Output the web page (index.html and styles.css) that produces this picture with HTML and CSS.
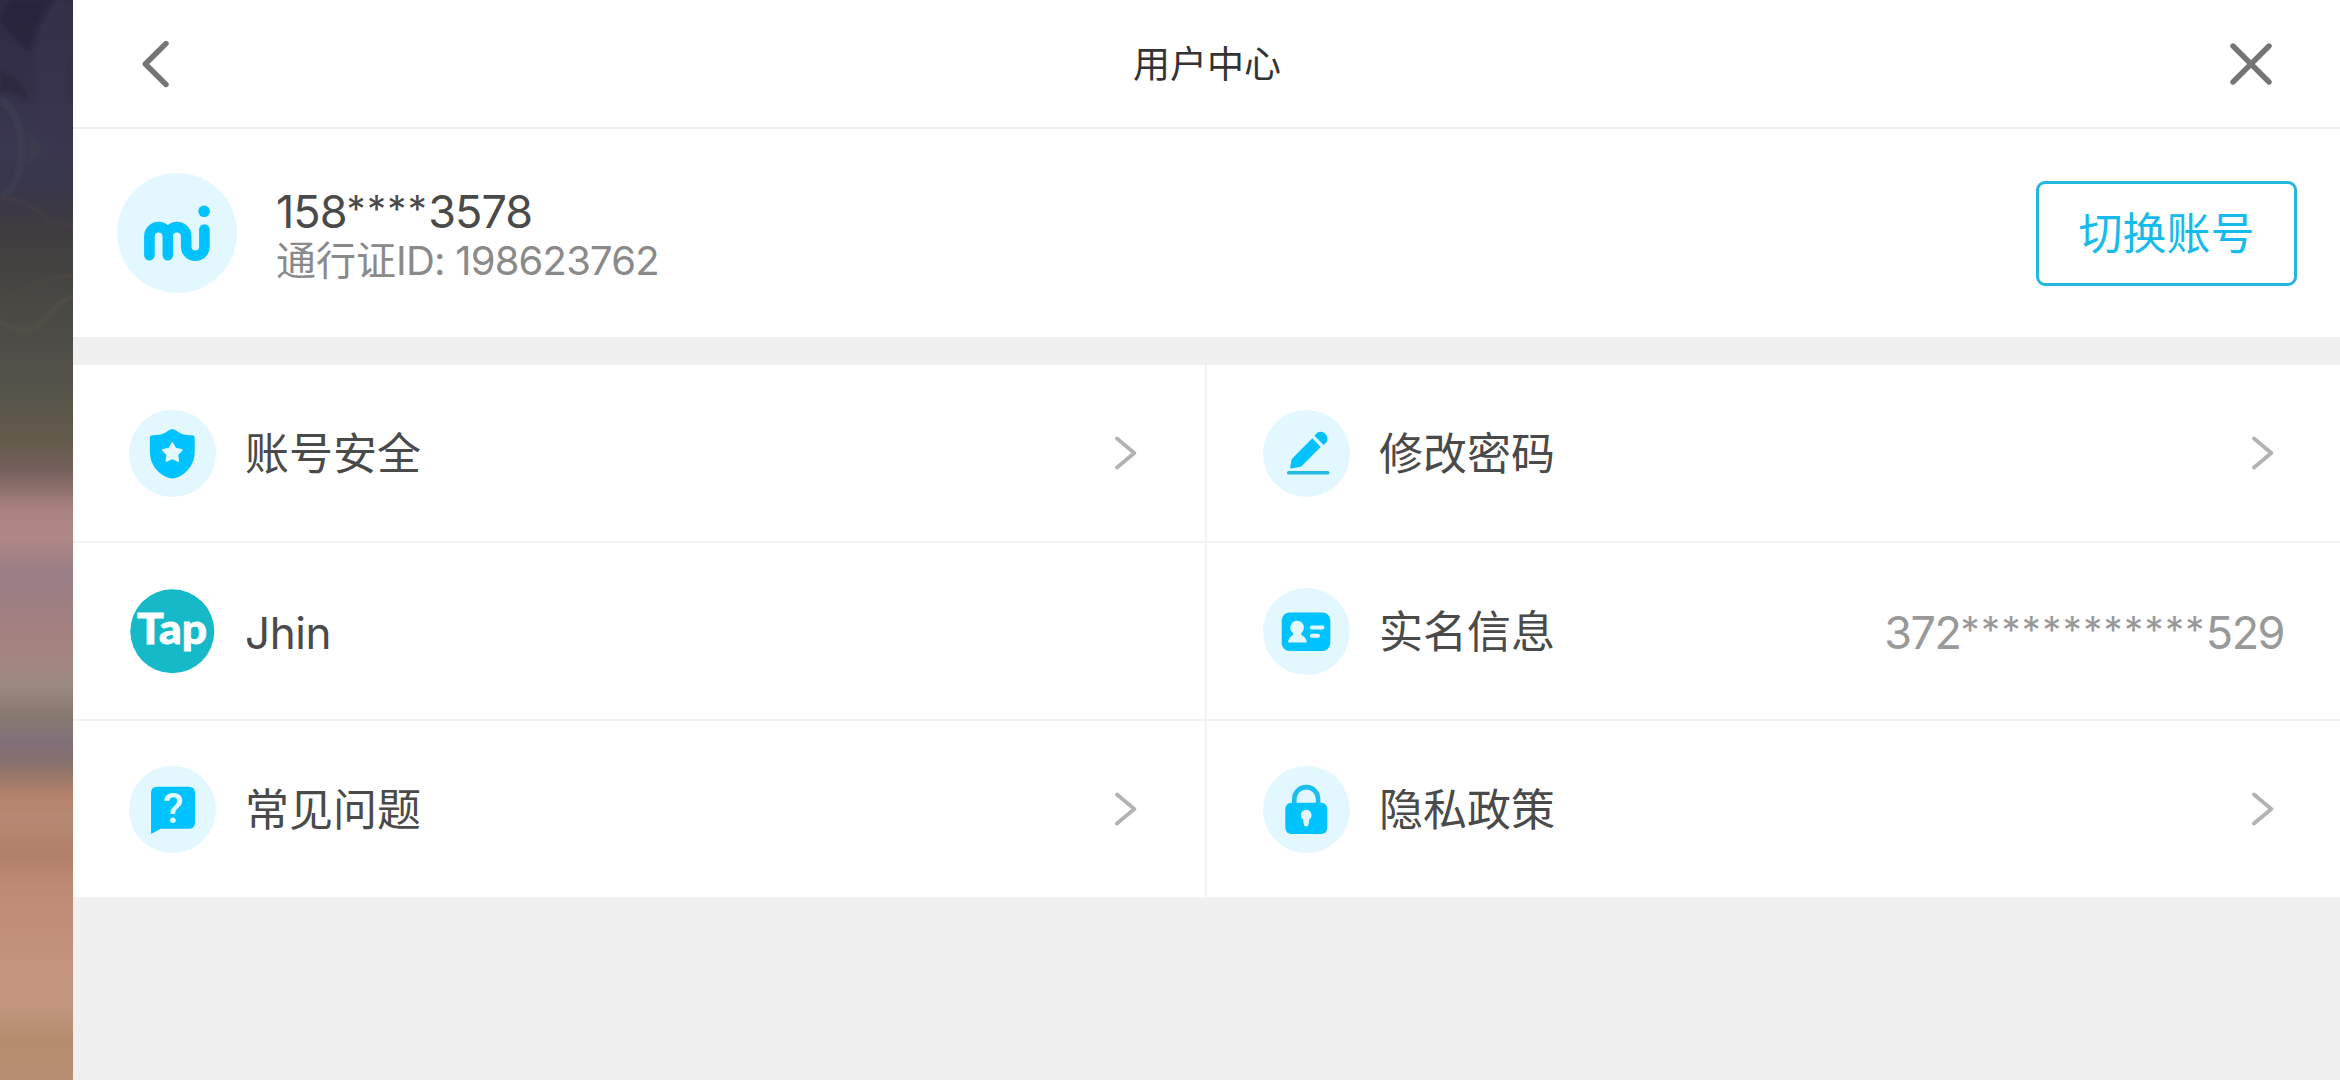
FILE: index.html
```
<!DOCTYPE html>
<html lang="zh-CN">

<head>
    <meta charset="UTF-8">
    <meta name="viewport" content="width=device-width, initial-scale=1.0">
    <title>用户中心</title>
    <link rel="stylesheet" href="styles.css">
</head>

<body>
    <div class="backdrop">
        <svg class="swirls" viewBox="0 0 73 360" fill="none">
            <path d="M0 20 Q28 60 32 46 Q36 20 52 0 H12 Q2 8 0 20Z" fill="#262139" />
            <path d="M0 70 Q24 78 28 100 Q10 90 0 92Z" fill="#29263c" />
            <path d="M73 0 H56 Q34 30 34 78 Q36 140 73 174 V110 Q58 80 73 50Z" fill="#39354e" />
            <path d="M0 100 Q20 110 22 150 Q20 190 0 196" stroke="#3e4256" stroke-width="7" />
            <path d="M30 130 L42 150 L28 168Z" fill="#3d3d50" />
            <path d="M0 198 Q30 200 50 222 L73 226" stroke="#464048" stroke-width="4" />
            <path d="M0 322 Q30 340 48 316 Q60 300 73 296" stroke="#56524a" stroke-width="5" />
            <path d="M0 304 Q20 284 73 274" stroke="#4c4944" stroke-width="4" />
        </svg>
    </div>

    <div class="panel">
        <div class="header">
            <svg class="back" viewBox="0 0 28 50">
                <path d="M24 4.5 L3.3 25 L24 45.5" />
            </svg>
            <h1>用户中心</h1>
            <svg class="close" viewBox="0 0 42 42">
                <path d="M3 3 L39 39 M39 3 L3 39" />
            </svg>
        </div>

        <div class="account">
            <svg class="avatar" viewBox="0 0 120 120">
                <circle cx="60" cy="60" r="60" fill="#e3f8fe" />
                <path class="mi" d="M32.4 82.2 V63.3 a9.2 9.2 0 0 1 18.4 0 V82.2 M50.8 63.3 a9.2 9.2 0 0 1 18.4 0 V73.5 a9.1 9.3 0 0 0 18.2 0 V56.6" />
                <circle class="fill" cx="87.1" cy="38.3" r="5.8" />
            </svg>
            <div class="info">
                <p class="phone">158<span class="stars">****</span>3578</p>
                <p class="passport">通行证<span>ID: 198623762</span></p>
            </div>
            <button>切换账号</button>
        </div>

        <div class="menu">
            <div class="item">
                <svg class="icon" viewBox="0 0 87 87">
                    <circle class="light" cx="43.5" cy="43.5" r="43.5" />
                    <path class="fill" d="M43.3 19 Q45 19 47 20.5 C52 24.5 57 25.3 63 25.3 Q65.7 25.5 65.7 28 V42 C65.7 56 56 65 47 67.8 Q43.3 69 39.6 67.8 C30.6 65 20.9 56 20.9 42 V28 Q20.9 25.5 23.6 25.3 C29.6 25.3 34.6 24.5 39.6 20.5 Q41.6 19 43.3 19Z" />
                    <path class="light star" d="M43.3 33.2 L46.4 38.8 L52.6 40 L48.2 44.6 L49.1 50.9 L43.3 48.2 L37.5 50.9 L38.4 44.6 L34 40 L40.2 38.8Z" />
                </svg>
                <span class="label">账号安全</span>
                <svg class="arrow" viewBox="0 0 22 34">
                    <path d="M2 2.5 L19.3 17 L2 31.5" />
                </svg>
            </div>

            <div class="item">
                <svg class="icon" viewBox="0 0 87 87">
                    <circle class="light" cx="43.5" cy="43.5" r="43.5" />
                    <path class="fill" d="M49.3 28.3 L57.7 37 L39 55.8 Q38 56.8 36.5 57 L28.2 58.4 Q27 58.4 27.2 57.2 L28.4 50.5 Q28.8 49 30 47.7Z" />
                    <path class="fill" d="M51.5 25.7 L54 22.8 A6.9 6.9 0 0 1 63.3 32.4 L60.5 35Z" />
                    <rect x="24" y="61" width="42.3" height="3.4" rx="1.5" fill="#26b9e4" />
                </svg>
                <span class="label">修改密码</span>
                <svg class="arrow" viewBox="0 0 22 34">
                    <path d="M2 2.5 L19.3 17 L2 31.5" />
                </svg>
            </div>

            <div class="item">
                <svg class="icon" viewBox="0 0 87 87">
                    <circle cx="43.3" cy="43.3" r="42" fill="#16b9c8" />
                    <text class="tap" x="8" y="56" textLength="70" lengthAdjust="spacingAndGlyphs">Tap</text>
                </svg>
                <span class="label name">Jhin</span>
            </div>

            <div class="item">
                <svg class="icon" viewBox="0 0 87 87">
                    <circle class="light" cx="43.5" cy="43.5" r="43.5" />
                    <rect class="fill" x="18.7" y="24.4" width="48.6" height="38.6" rx="8" />
                    <path class="light" d="M34 32.7 a6.9 6.9 0 0 1 4.3 12.3 V47 Q43 49 43.9 54.4 H25 Q25.8 49 30 47 V45 A6.9 6.9 0 0 1 34 32.7Z" />
                    <path class="lines" d="M48.8 39.5 H59.5 M48.8 47.7 H55" />
                </svg>
                <span class="label">实名信息</span>
                <span class="value">372<span class="stars">************</span>529</span>
            </div>

            <div class="item">
                <svg class="icon" viewBox="0 0 87 87">
                    <circle class="light" cx="43.5" cy="43.5" r="43.5" />
                    <path class="fill" d="M22 27 Q22 20.8 28.2 20.8 H59.5 Q66 20.8 66 27 V56.5 Q66 62.8 59.5 62.8 H31.7 L23 67.5 Q22 68 22 67Z" />
                    <text class="question" x="44.3" y="56.5">?</text>
                </svg>
                <span class="label">常见问题</span>
                <svg class="arrow" viewBox="0 0 22 34">
                    <path d="M2 2.5 L19.3 17 L2 31.5" />
                </svg>
            </div>

            <div class="item">
                <svg class="icon" viewBox="0 0 87 87">
                    <circle class="light" cx="43.5" cy="43.5" r="43.5" />
                    <path class="shackle" d="M31.3 38 V33 a11.9 11.9 0 0 1 23.8 0 V38" />
                    <rect class="fill" x="22.3" y="36.7" width="42" height="31.3" rx="6" />
                    <path class="light" d="M43.2 43.8 a5.3 5.3 0 0 1 3.2 9.5 L45.6 58 a2.4 2.4 0 0 1 -4.8 0 L40 53.3 A5.3 5.3 0 0 1 43.2 43.8Z" />
                </svg>
                <span class="label">隐私政策</span>
                <svg class="arrow" viewBox="0 0 22 34">
                    <path d="M2 2.5 L19.3 17 L2 31.5" />
                </svg>
            </div>
        </div>
    </div>
</body>

</html>
```
FILE: styles.css
```
* {
    box-sizing: border-box;
    margin: 0;
    padding: 0;
}

body {
    display: flex;
    height: 1080px;
    overflow: hidden;
    font-family: Inter, "Noto Sans CJK SC", sans-serif;
    color: #4a4a4a;
}

.backdrop {
    width: 73px;
    overflow: hidden;
    background: linear-gradient(#2e2a43 0, #343149 90px, #3a3850 150px, #38364a 185px, #3e3a42 215px,
            #434140 260px, #4b4943 310px, #4f4d47 350px, #58564a 400px, #635a4b 440px, #73605a 470px,
            #aa8280 510px, #b08785 535px, #987e86 575px, #a3807f 625px, #a3857f 660px, #9b8a80 685px,
            #88796f 715px, #82707a 742px, #86706c 762px, #b3826a 795px, #b68873 820px, #b08068 855px,
            #be8a74 885px, #c3937d 960px, #c4967f 1005px, #b58c6e 1040px, #b98e72 1080px);
}

.swirls {
    display: block;
    width: 73px;
    height: 360px;
    opacity: 0.6;
    filter: blur(1.5px);
}

.panel {
    flex: 1;
    background-color: #f0f0f0;
}

.header {
    display: grid;
    grid-template-columns: 1fr auto 1fr;
    align-items: center;
    height: 129px;
    padding: 0 68px 0 69px;
    background-color: #fff;
    border-bottom: 2px solid #f0f0f0;
}

.header h1 {
    padding-bottom: 3px;
    font-size: 37px;
    font-weight: 400;
    color: #333;
}

.header path {
    fill: none;
    stroke: #757575;
    stroke-width: 5.4;
    stroke-linecap: round;
    stroke-linejoin: round;
}

.back {
    width: 28px;
    height: 50px;
}

.close {
    width: 42px;
    height: 42px;
    justify-self: end;
}

.account {
    display: flex;
    align-items: center;
    height: 208px;
    padding: 0 43px 0 44px;
    background-color: #fff;
}

.avatar {
    width: 120px;
    height: 120px;
}

.mi {
    fill: none;
    stroke: #00c2ff;
    stroke-width: 10.6;
    stroke-linecap: round;
}

.info {
    flex: 1;
    margin-left: 39px;
    padding-top: 4px;
}

.phone {
    font-size: 45px;
    line-height: 50px;
    letter-spacing: -1px;
}

.passport {
    font-size: 40px;
    line-height: 47px;
    color: #8a8a8a;
}

.passport span {
    letter-spacing: -0.8px;
}

.stars {
    font-size: 38px;
    line-height: 0;
    letter-spacing: 1.4px;
    vertical-align: 5px;
}

button {
    width: 261px;
    height: 105px;
    padding-bottom: 4px;
    border: 3px solid #26b7de;
    border-radius: 9px;
    background-color: #fff;
    font-family: inherit;
    font-size: 44px;
    color: #16bbec;
}

.menu {
    display: grid;
    grid-template-columns: 1132px 1133px;
    grid-template-rows: 176px 176px 176px;
    gap: 2px;
    margin-top: 28px;
    background-color: #f3f3f3;
    border-bottom: 1px solid #f5f5f5;
}

.item {
    display: flex;
    align-items: center;
    padding: 0 56px;
    background-color: #fff;
}

.icon {
    width: 87px;
    height: 87px;
}

.label {
    flex: 1;
    margin-left: 29px;
    padding-bottom: 4px;
    font-size: 44px;
}

.name {
    padding: 3px 0 0;
    letter-spacing: -0.4px;
}

.value {
    padding-top: 3px;
    font-size: 45px;
    letter-spacing: -1.5px;
    color: #999;
}

.arrow {
    width: 22px;
    height: 34px;
    margin-right: 10px;
    fill: none;
    stroke: #b2b2b2;
    stroke-width: 3.8;
    stroke-linecap: round;
    stroke-linejoin: round;
}

.item:nth-child(odd) .arrow {
    margin-right: 12px;
}

.fill {
    fill: #00c2ff;
}

.light {
    fill: #e2f7fe;
}

.star {
    stroke: #e2f7fe;
    stroke-width: 2;
    stroke-linejoin: round;
}

.lines {
    stroke: #e2f7fe;
    stroke-width: 4;
    stroke-linecap: round;
}

.shackle {
    fill: none;
    stroke: #1abfef;
    stroke-width: 4.6;
}

.tap {
    font-family: Lato, sans-serif;
    font-size: 42px;
    font-weight: 900;
    fill: #fff;
    stroke: #fff;
    stroke-width: 0.8;
}

.question {
    font-family: Roboto, sans-serif;
    font-size: 42px;
    font-weight: 500;
    text-anchor: middle;
    fill: #e2f7fe;
}
```
